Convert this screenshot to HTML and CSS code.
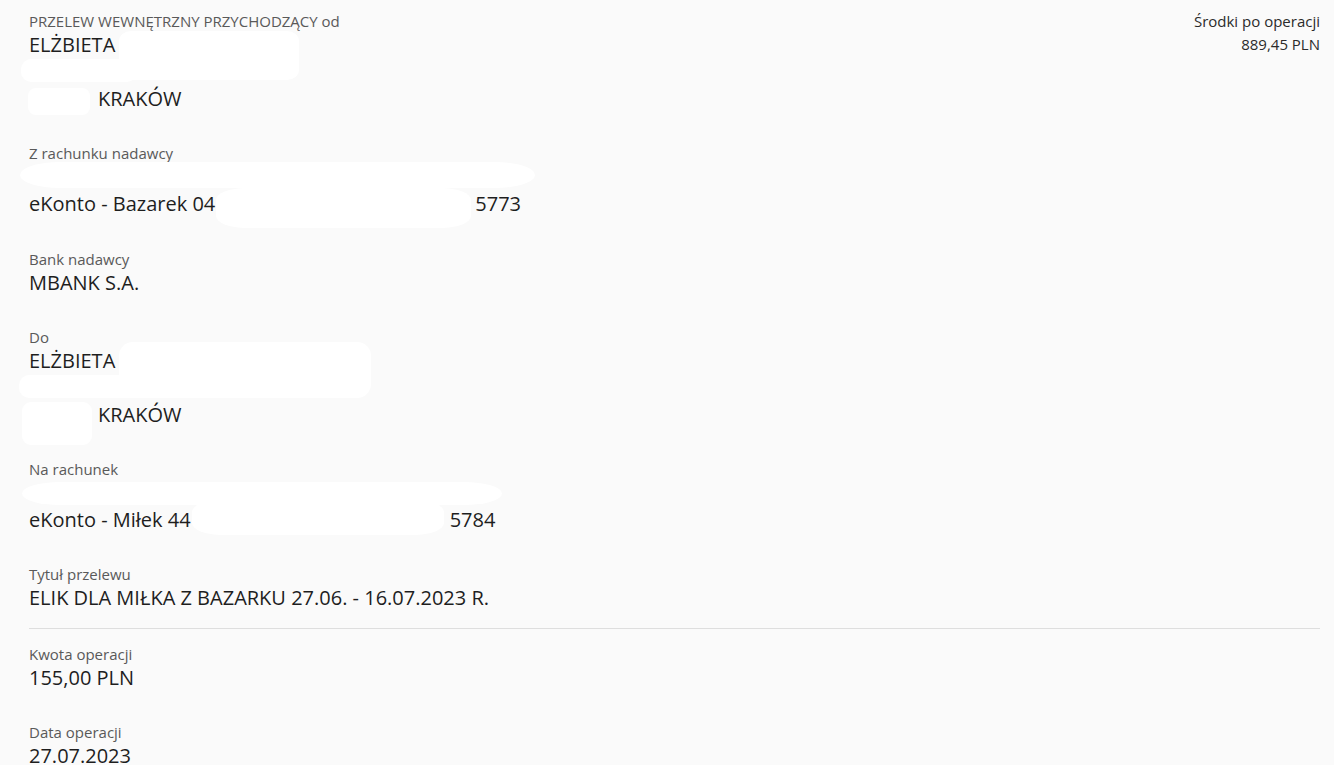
FILE: index.html
```html
<!DOCTYPE html>
<html lang="pl">
<head>
<meta charset="utf-8">
<title>Szczegóły operacji</title>
<link rel="stylesheet" href="styles.css">
</head>
<body>
<main class="page">
  <div class="top">
    <section class="field">
      <div class="label">PRZELEW WEWNĘTRZNY PRZYCHODZĄCY od</div>
      <div class="value">
        <div class="line">ELŻBIETA</div>
        <div class="line"></div>
        <div class="line indent">KRAKÓW</div>
        <span class="mask m-a"></span>
        <span class="mask m-b"></span>
        <span class="mask m-c"></span>
      </div>
    </section>
    <aside class="balance">
      <div>Środki po operacji</div>
      <div>889,45 PLN</div>
    </aside>
  </div>

  <section class="field account">
    <div class="label">Z rachunku nadawcy</div>
    <div class="value">
      <div class="line"></div>
      <div class="line">eKonto - Bazarek 04<span class="digits d-1"><span class="mask m-e"></span></span>5773</div>
      <span class="mask m-d"></span>
    </div>
  </section>

  <section class="field">
    <div class="label">Bank nadawcy</div>
    <div class="value"><div class="line">MBANK S.A.</div></div>
  </section>

  <section class="field">
    <div class="label">Do</div>
    <div class="value">
      <div class="line">ELŻBIETA</div>
      <div class="line"></div>
      <div class="line indent">KRAKÓW</div>
      <span class="mask m-f"></span>
      <span class="mask m-g"></span>
      <span class="mask m-h"></span>
    </div>
  </section>

  <section class="field">
    <div class="label">Na rachunek</div>
    <div class="value">
      <div class="line"></div>
      <div class="line">eKonto - Miłek 44<span class="digits d-2"><span class="mask m-j"></span></span>5784</div>
      <span class="mask m-i"></span>
    </div>
  </section>

  <section class="field last">
    <div class="label">Tytuł przelewu</div>
    <div class="value"><div class="line">ELIK DLA MIŁKA Z BAZARKU 27.06. - 16.07.2023 R.</div></div>
  </section>

  <hr class="divider">

  <section class="field">
    <div class="label">Kwota operacji</div>
    <div class="value"><div class="line">155,00 PLN</div></div>
  </section>

  <section class="field">
    <div class="label">Data operacji</div>
    <div class="value"><div class="line">27.07.2023</div></div>
  </section>
</main>
</body>
</html>
```

FILE: styles.css
```css
html, body {
  margin: 0;
  padding: 0;
  background: #fafafa;
}

body {
  font-family: "Open Sans", "Noto Sans", "Liberation Sans", sans-serif;
  color: #1e1e1e;
  overflow: hidden;
}

.page {
  padding: 11px 14px 0 29px;
}

.top {
  display: flex;
  justify-content: space-between;
  align-items: flex-start;
}

.balance {
  font-size: 15px;
  line-height: 23px;
  text-align: right;
  color: #2b2b2b;
  margin-top: -1px;
}

.field {
  margin-bottom: 31px;
}

.field.account {
  margin-bottom: 32px;
}

.field.last {
  margin-bottom: 0;
}

.label {
  font-size: 15px;
  line-height: 20px;
  color: #595959;
}

.value {
  position: relative;
  font-size: 20px;
  line-height: 27px;
  color: #1e1e1e;
}

.line {
  height: 27px;
  white-space: nowrap;
}

.indent {
  padding-left: 69px;
}

.digits {
  position: relative;
  display: inline-block;
  vertical-align: top;
  height: 27px;
}

.d-1 { width: 260px; }
.d-2 { width: 259px; }

.mask {
  position: absolute;
  background: #ffffff;
  border-radius: 12px / 10px;
}

/* sender */
.m-a { left: 90px; top: 0; width: 180px; height: 49px; }
.m-b { left: -8px; top: 28px; width: 116px; height: 23px; border-radius: 10px; }
.m-c { left: -1px; top: 57px; width: 62px; height: 27px; border-radius: 8px; }

/* sender account */
.m-d { left: -9px; top: -1px; width: 515px; height: 26px; border-radius: 40px / 13px; }
.m-e { left: 1px; top: -2px; width: 255px; height: 40px; border-radius: 30px / 12px; }

/* recipient */
.m-f { left: 90px; top: -5px; width: 252px; height: 56px; border-radius: 14px; }
.m-g { left: -10px; top: 28px; width: 120px; height: 23px; border-radius: 10px; }
.m-h { left: -7px; top: 55px; width: 70px; height: 43px; border-radius: 9px; }

/* recipient account */
.m-i { left: -7px; top: 3px; width: 480px; height: 23px; border-radius: 40px / 12px; }
.m-j { left: 1px; top: -6px; width: 252px; height: 35px; border-radius: 30px / 12px; }

.divider {
  border: 0;
  border-top: 1px solid #dedede;
  margin: 17px 0 15px 0;
  height: 0;
}
```
